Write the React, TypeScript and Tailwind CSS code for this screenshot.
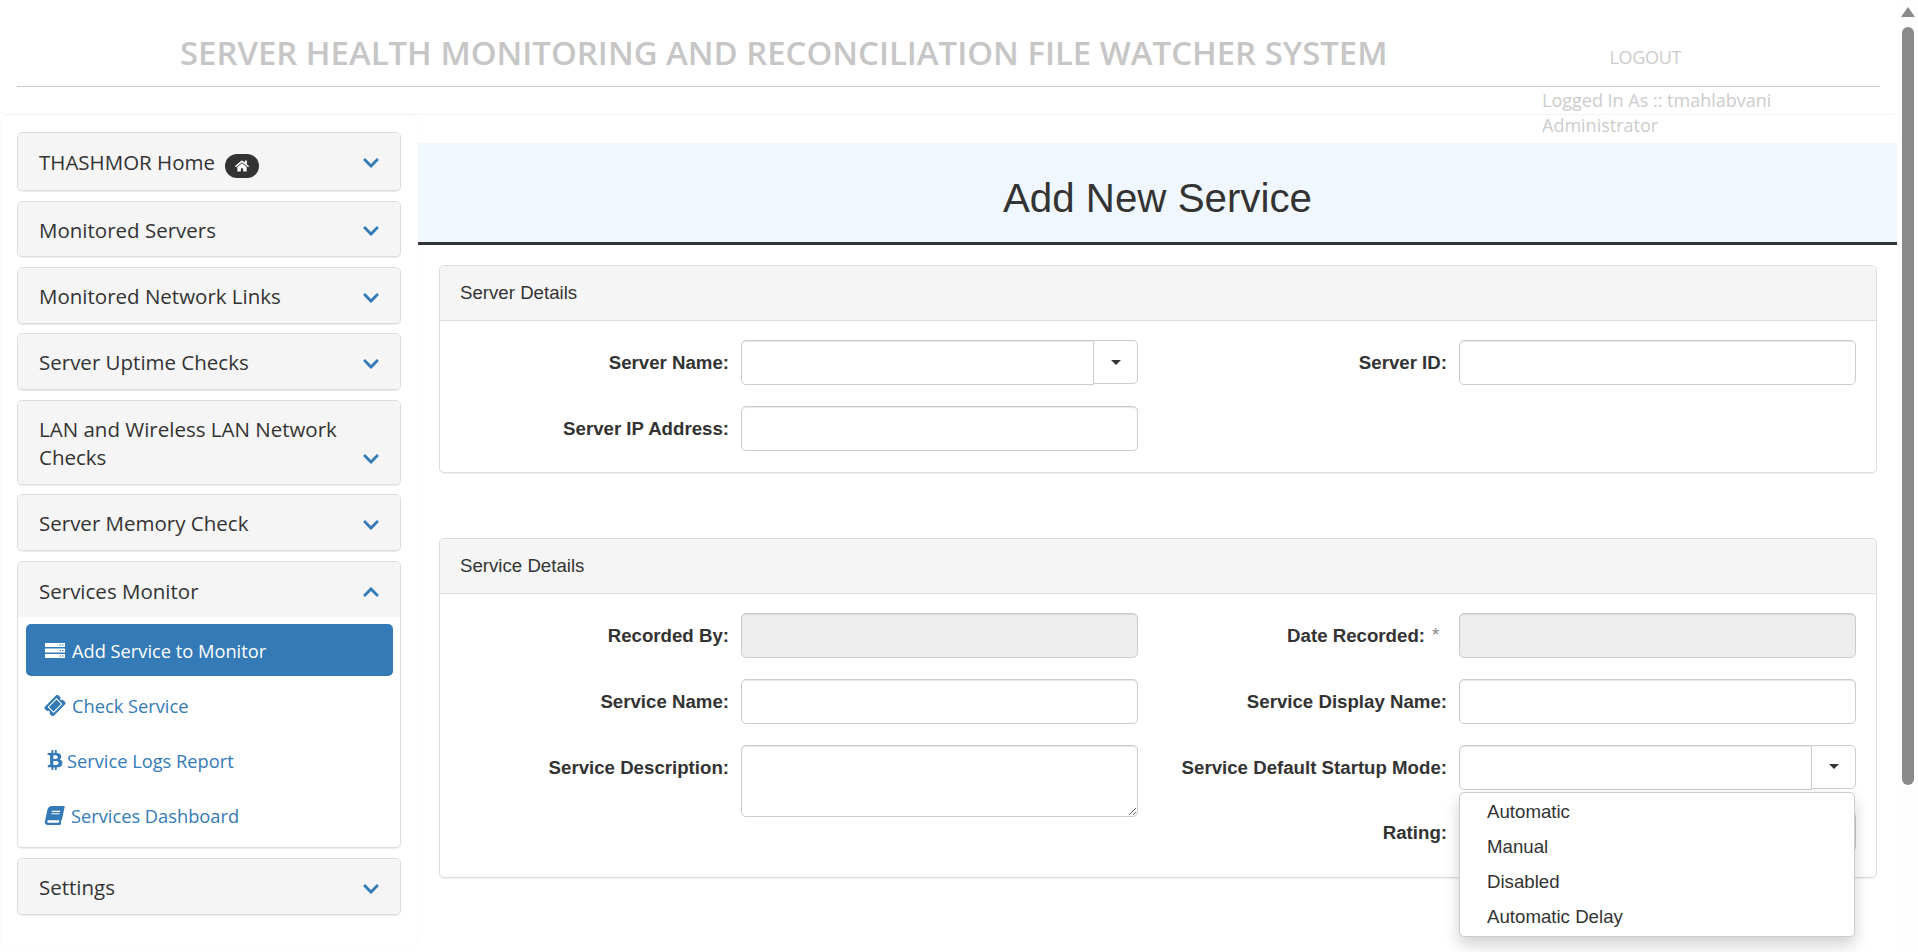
import { FaBook, FaBtc, FaChevronDown, FaChevronUp, FaHome, FaTicketAlt } from 'react-icons/fa';

const sideFont = "font-['Open_Sans',sans-serif]";

function ServerIcon() {
  return (
    <svg width="20" height="15" viewBox="0 0 20 15" className="shrink-0">
      <path fillRule="evenodd" fill="currentColor" d="M0 0h20v4H0zM0 5.500h20v4H0zM0 11h20v4H0zM14.500 1.500v1h1.500v-1zM17 1.500v1h1.500v-1zM14.500 7v1h1.500V7zM17 7v1h1.500V7zM14.500 12.500v1h1.500v-1zM17 12.500v1h1.500v-1z" />
    </svg>
  );
}

function SidePanel({ title, height, open = false, badge = false, children }: { title: string; height: string; open?: boolean; badge?: boolean; children?: React.ReactNode }) {
  return (
    <div className="rounded-[5px] border-[1.33px] border-[#ddd] bg-white shadow-[0_1px_1px_rgba(0,0,0,0.08)] overflow-hidden">
      <div className={`flex items-end justify-between bg-[#f5f5f5] pl-[21px] pr-[20px] text-[#333] ${height} ${badge ? 'pb-[2px]' : ''}`}>
        <div className="pb-[12px] text-[20.500px] leading-[28.500px]">
          {title}
          {badge && (
            <span className="ml-[10px] inline-flex h-[24px] w-[34px] translate-y-[6px] items-center justify-center rounded-full bg-[#333] align-top text-[14px] text-white">
              <FaHome />
            </span>
          )}
        </div>
        <div className="pb-[16px] text-[18px] text-[#337ab7]">
          {open ? <FaChevronUp /> : <FaChevronDown />}
        </div>
      </div>
      {children}
    </div>
  );
}

function SubItem({ icon, label, active = false, gap }: { icon: React.ReactNode; label: string; active?: boolean; gap: string }) {
  return (
    <div className={`flex h-[52px] items-center rounded-[5px] pl-[19px] text-[18.250px] ${gap} ${active ? 'bg-[#337ab7] text-white' : 'text-[#337ab7]'}`}>
      {icon}
      <span>{label}</span>
    </div>
  );
}

function Input({ disabled = false, className = '' }: { disabled?: boolean; className?: string }) {
  return (
    <div className={`h-[45.330px] rounded-[5px] border-[1.33px] border-[#ccc] shadow-[inset_0_1px_1px_rgba(0,0,0,0.1)] ${disabled ? 'bg-[#eee]' : 'bg-white'} ${className}`} />
  );
}

function Combo({ menu = false }: { menu?: boolean }) {
  return (
    <div className="relative flex h-[45.330px] w-full">
      <div className="h-[45.330px] flex-1 rounded-l-[5px] border-[1.33px] border-[#ccc] bg-white shadow-[inset_0_1px_1px_rgba(0,0,0,0.1)]" />
      <div className="-ml-[1px] flex h-[44px] w-[45px] items-center justify-center rounded-r-[5px] border-[1.33px] border-[#ccc] bg-white">
        <div className="h-0 w-0 border-x-[5px] border-t-[5.500px] border-x-transparent border-t-[#333]" />
      </div>
      {menu && (
        <div className="absolute left-0 top-[47px] z-10 w-[396px] rounded-[5px] border-[1.33px] border-[#ccc] bg-white py-[1px] font-['Liberation_Sans',sans-serif] text-[18.670px] text-[#333] shadow-[0_8px_16px_rgba(0,0,0,0.18)]">
          {['Automatic', 'Manual', 'Disabled', 'Automatic Delay'].map((o) => (
            <div key={o} className="flex h-[35.200px] items-center pl-[27px]">{o}</div>
          ))}
        </div>
      )}
    </div>
  );
}

function Field({ label, star = false, width, children }: { label: string; star?: boolean; width: string; children: React.ReactNode }) {
  return (
    <div className="flex gap-[12px]">
      <div className={`flex h-[45.330px] shrink-0 items-center justify-end font-bold text-[#333] ${width}`}>
        {label}
        {star && <span className="ml-[7px] w-[15px] -translate-y-[1px] font-normal text-[#888]">*</span>}
      </div>
      <div className="w-[397px] shrink-0">{children}</div>
    </div>
  );
}

function Panel({ title, children, className = '' }: { title: string; children: React.ReactNode; className?: string }) {
  return (
    <div className={`ml-[21px] w-[1438px] rounded-[5px] border-[1.33px] border-[#ddd] bg-white shadow-[0_1px_1px_rgba(0,0,0,0.06)] ${className}`}>
      <div className="flex h-[55px] items-center rounded-t-[5px] border-b-[1.33px] border-[#ddd] bg-[#f5f5f5] pl-[20px] text-[#333]">{title}</div>
      {children}
    </div>
  );
}

export default function App() {
  return (
    <div className={`flex h-[952px] w-[1918px] overflow-hidden bg-white ${sideFont}`}>
      <div className="w-[1897px]">
        <header className="h-[115px] rounded-b-[5px] border-b-[1.33px] border-[#f3f3f3] bg-white">
          <div className="flex h-[86px] pl-[180px]">
            <h1 className="pt-[31px] text-[32.900px] font-semibold leading-[44px] text-[#c6c6c6]">
              SERVER HEALTH MONITORING AND RECONCILIATION FILE WATCHER SYSTEM
            </h1>
            <span className="ml-[222px] pt-[44px] text-[18px] leading-[26px] tracking-[-0.3px] text-[#ccc]">LOGOUT</span>
          </div>
          <div className="ml-[17px] w-[1863px] border-t-[1.33px] border-[#ccc]" />
          <div className="relative z-10 pl-[1542px] pt-[1px] text-[18px] leading-[25px] text-[#ccc]">
            <div>Logged In As :: tmahlabvani</div>
            <div>Administrator</div>
          </div>
        </header>

        <div className="flex">
          <aside className="flex h-[833px] w-[418px] shrink-0 flex-col gap-[9.670px] rounded-[6px] border border-[#fbfbfb] px-[16px] pt-[16px]">
            <SidePanel title="THASHMOR Home" height="h-[57px]" badge />
            <SidePanel title="Monitored Servers" height="h-[54.670px]" />
            <SidePanel title="Monitored Network Links" height="h-[54.670px]" />
            <SidePanel title="Server Uptime Checks" height="h-[54.670px]" />
            <SidePanel title="LAN and Wireless LAN Network Checks" height="h-[83px]" />
            <SidePanel title="Server Memory Check" height="h-[54.670px]" />
            <SidePanel title="Services Monitor" height="h-[55.670px]" open>
              <div className="flex h-[230px] flex-col gap-[3px] pl-[8px] pr-[7px] pt-[7px]">
                <SubItem active icon={<ServerIcon />} label="Add Service to Monitor" gap="gap-[7px]" />
                <SubItem icon={<FaTicketAlt className="w-[20px] -rotate-45 text-[17px]" />} label="Check Service" gap="gap-[7px]" />
                <SubItem icon={<FaBtc className="text-[20px]" />} label="Service Logs Report" gap="gap-[2px]" />
                <SubItem icon={<FaBook className="-skew-x-12 text-[19px]" />} label="Services Dashboard" gap="gap-[7px]" />
              </div>
            </SidePanel>
            <SidePanel title="Settings" height="h-[54.670px]" />
          </aside>

          <main className="w-[1479px] pt-[28px] font-['Liberation_Sans',sans-serif] text-[18.670px]">
            <div className="flex h-[102px] items-center justify-center border-b-[3px] border-[#333] bg-[#f0f7fe] pt-[14px] text-[40.300px] text-[#333]">
              Add New Service
            </div>

            <Panel title="Server Details" className="mt-[20px] h-[208px]">
              <div className="flex pt-[19px]">
                <div className="flex w-[698px] flex-col gap-[20.670px]">
                  <Field label="Server Name:" width="w-[289px]"><Combo /></Field>
                  <Field label="Server IP Address:" width="w-[289px]"><Input /></Field>
                </div>
                <div className="w-[717px]">
                  <Field label="Server ID:" width="w-[309px]"><Input /></Field>
                </div>
              </div>
            </Panel>

            <Panel title="Service Details" className="mt-[65px] h-[340px]">
              <div className="flex pt-[19px]">
                <div className="flex w-[698px] flex-col gap-[20.670px]">
                  <Field label="Recorded By:" width="w-[289px]"><Input disabled /></Field>
                  <Field label="Service Name:" width="w-[289px]"><Input /></Field>
                  <Field label="Service Description:" width="w-[289px]">
                    <textarea className="block h-[72px] w-full rounded-[5px] border-[1.33px] border-[#ccc] bg-white shadow-[inset_0_1px_1px_rgba(0,0,0,0.1)] outline-none" />
                  </Field>
                </div>
                <div className="flex w-[717px] flex-col gap-[20.670px]">
                  <Field label="Date Recorded:" star width="w-[309px]"><Input disabled /></Field>
                  <Field label="Service Display Name:" width="w-[309px]"><Input /></Field>
                  <div className="flex flex-col gap-[20px]">
                    <Field label="Service Default Startup Mode:" width="w-[309px]"><Combo menu /></Field>
                    <Field label="Rating:" width="w-[309px]"><Input className="mt-[2px] !h-[40px] border-[#888]" /></Field>
                  </div>
                </div>
              </div>
            </Panel>
          </main>
        </div>
      </div>

      <div className="relative w-[21px] bg-[#fdfdfd]">
        <div className="absolute left-[4px] top-[7px] h-0 w-0 border-x-[7px] border-b-[10px] border-x-transparent border-b-[#8a8a8a]" />
        <div className="absolute left-[5px] top-[27px] h-[758px] w-[12px] rounded-full bg-[#8a8a8a]" />
      </div>
    </div>
  );
}
